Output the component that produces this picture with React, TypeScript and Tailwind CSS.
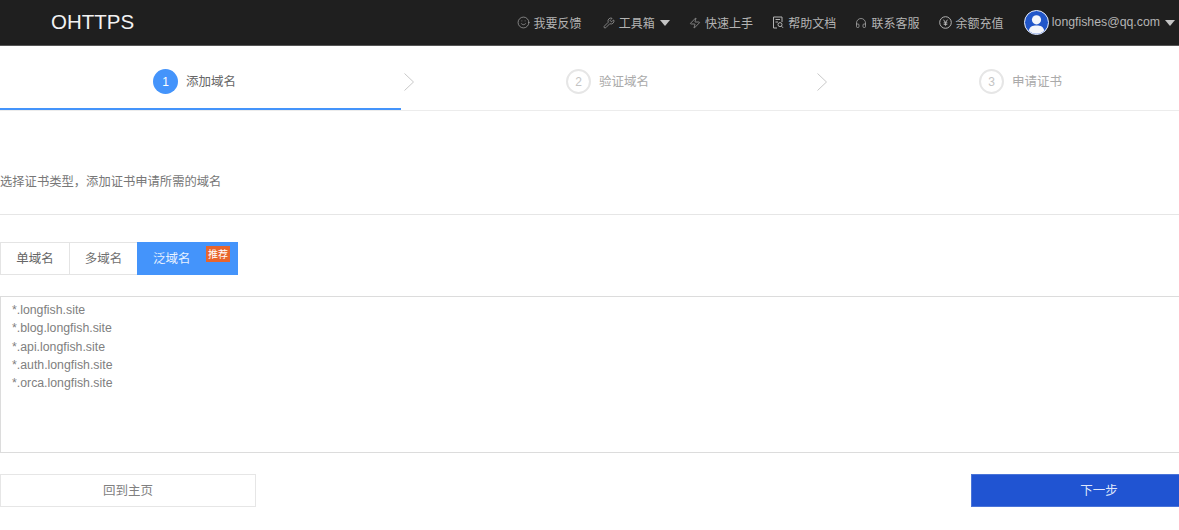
import { Headphones, Smile, Wrench, Zap } from 'lucide-react';

const FONT = "font-['Liberation_Sans','Noto_Sans_CJK_SC',sans-serif]";

const domains = [
  '*.longfish.site',
  '*.blog.longfish.site',
  '*.api.longfish.site',
  '*.auth.longfish.site',
  '*.orca.longfish.site',
];

function Caret() {
  return <span className="ml-[1px] h-0 w-0 border-x-[5px] border-t-[6px] border-x-transparent border-t-[#c4c4c4]" />;
}

function DocIcon() {
  return (
    <svg width="12" height="13" viewBox="0 0 12 13" fill="none" stroke="currentColor" strokeWidth="1">
      <path d="M5 12H1.5V1H10V6" />
      <path d="M3.5 3.5H8M3.5 6H6" />
      <circle cx="8" cy="8.6" r="2" />
      <path d="M9.5 10.2L11 11.8" />
    </svg>
  );
}

function YenIcon() {
  return (
    <svg width="13" height="13" viewBox="0 0 13 13" fill="none" stroke="currentColor" strokeWidth="1">
      <circle cx="6.5" cy="6.5" r="5.8" />
      <path d="M4.5 3.7L6.5 6.5L8.5 3.7M6.5 6.5V9.7M4.7 6.8H8.3M4.7 8.3H8.3" />
    </svg>
  );
}

function Avatar() {
  return (
    <svg width="25" height="25" viewBox="0 0 25 25">
      <circle cx="12.5" cy="12.5" r="12" fill="#2156c9" stroke="#e8eefb" strokeWidth="1" />
      <circle cx="12.5" cy="9.8" r="4.6" fill="#f4f6fb" />
      <path d="M4.8 20.5C5.5 16.6 8.4 15.4 12.5 15.4S19.5 16.6 20.2 20.5C18.2 22.6 15.5 23.8 12.5 23.8S6.8 22.6 4.8 20.5Z" fill="#f4f6fb" />
    </svg>
  );
}

function NavItem({ icon, label, caret, className }: { icon: React.ReactNode; label: string; caret?: boolean; className?: string }) {
  return (
    <div className={`flex items-center gap-[4px] ${className ?? ''}`}>
      {icon}
      <span className="whitespace-nowrap pt-[2px]">{label}</span>
      {caret && <Caret />}
    </div>
  );
}

function Step({ num, label, active }: { num: number; label: string; active?: boolean }) {
  return (
    <div
      className={`flex h-full w-[401px] shrink-0 items-center justify-center gap-[8px] border-b-2 pr-[12px] pt-[9px] ${
        active ? 'border-[#4494fb]' : 'border-transparent'
      }`}
    >
      <span
        className={`flex h-[25px] w-[25px] items-center justify-center rounded-full text-[12px] ${
          active ? 'bg-[#4494fb] text-white' : 'border-2 border-[#e6e6e6] text-[#c4c4c4]'
        }`}
      >
        {num}
      </span>
      <span className={`pt-[1px] text-[12.5px] ${active ? 'text-[#666666]' : 'text-[#aaaaaa]'}`}>{label}</span>
    </div>
  );
}

function Arrow() {
  return (
    <div className="flex w-[12px] shrink-0 items-center pl-[2px] pt-[7px]">
      <svg className="shrink-0" width="12" height="20" viewBox="0 0 12 20" fill="none" stroke="#c9c9c9" strokeWidth="1">
        <path d="M1.5 1.5L10.5 10L1.5 18.5" />
      </svg>
    </div>
  );
}

export default function App() {
  return (
    <div className={`h-[530px] w-[1179px] overflow-hidden bg-white ${FONT}`}>
      <header className="flex h-[46px] items-center justify-between border-b border-[#555555] bg-[#1f1f1f] pl-[51px] pr-[4px]">
        <div className="text-[20.5px] text-[#f2f2f2]">OHTTPS</div>
        <div className="flex items-center gap-[19.2px] text-[12px] text-[#b4b4b4]">
          <NavItem icon={<Smile className="h-[13px] w-[13px]" strokeWidth={1.2} />} label="我要反馈" />
          <NavItem className="ml-[2px]" icon={<Wrench className="h-[12px] w-[12px]" strokeWidth={1.3} />} label="工具箱" caret />
          <NavItem icon={<Zap className="h-[12px] w-[12px]" strokeWidth={1.3} />} label="快速上手" />
          <NavItem icon={<DocIcon />} label="帮助文档" />
          <NavItem icon={<Headphones className="h-[12px] w-[12px]" strokeWidth={1.4} />} label="联系客服" />
          <NavItem icon={<YenIcon />} label="余额充值" />
          <div className="ml-[1px] flex items-center gap-[3px]">
            <Avatar />
            <span className="text-[12.3px]">longfishes@qq.com</span>
            <span className="ml-[1px] flex">
              <Caret />
            </span>
          </div>
        </div>
      </header>

      <div className="flex h-[65px] border-b border-[#ececec]">
        <Step num={1} label="添加域名" active />
        <Arrow />
        <Step num={2} label="验证域名" />
        <Arrow />
        <Step num={3} label="申请证书" />
      </div>

      <p className="mt-[61px] pt-[1px] text-[12.3px] leading-[18px] text-[#777777]">选择证书类型，添加证书申请所需的域名</p>
      <div className="mt-[23px] border-t border-[#e6e6e6]" />

      <div className="mt-[27px] flex h-[33px] text-[12.5px]">
        <div className="flex w-[70px] items-center justify-center border border-[#e4e4e4] pt-[1px] text-[#666666]">单域名</div>
        <div className="ml-[-1px] flex w-[69px] items-center justify-center border border-[#e4e4e4] pt-[1px] text-[#707070]">多域名</div>
        <div className="relative ml-[-1px] flex w-[101px] items-center bg-[#4494fb] pl-[16px] pt-[1px] text-[#e8f1ff]">
          泛域名
          <span className="absolute right-[8px] top-[4px] flex h-[16px] w-[24px] items-center justify-center bg-[#e8652c] text-[10px] text-white">
            推荐
          </span>
        </div>
      </div>

      <div className="mr-[-48px] mt-[21px] h-[157px] border border-[#dcdcdc] px-[11px] py-[4px] text-[12.3px] leading-[18.3px] text-[#808080]">
        {domains.map((d) => (
          <div key={d}>{d}</div>
        ))}
      </div>

      <div className="mr-[-48px] mt-[21px] flex h-[33px] justify-between text-[12.5px]">
        <button className="w-[256px] border border-[#e6e6e6] pt-[1px] text-[#808080]">回到主页</button>
        <button className="w-[256px] border border-[#4a74d8] bg-[#2054d2] pt-[1px] text-[#dfe7fb]">下一步</button>
      </div>
    </div>
  );
}
